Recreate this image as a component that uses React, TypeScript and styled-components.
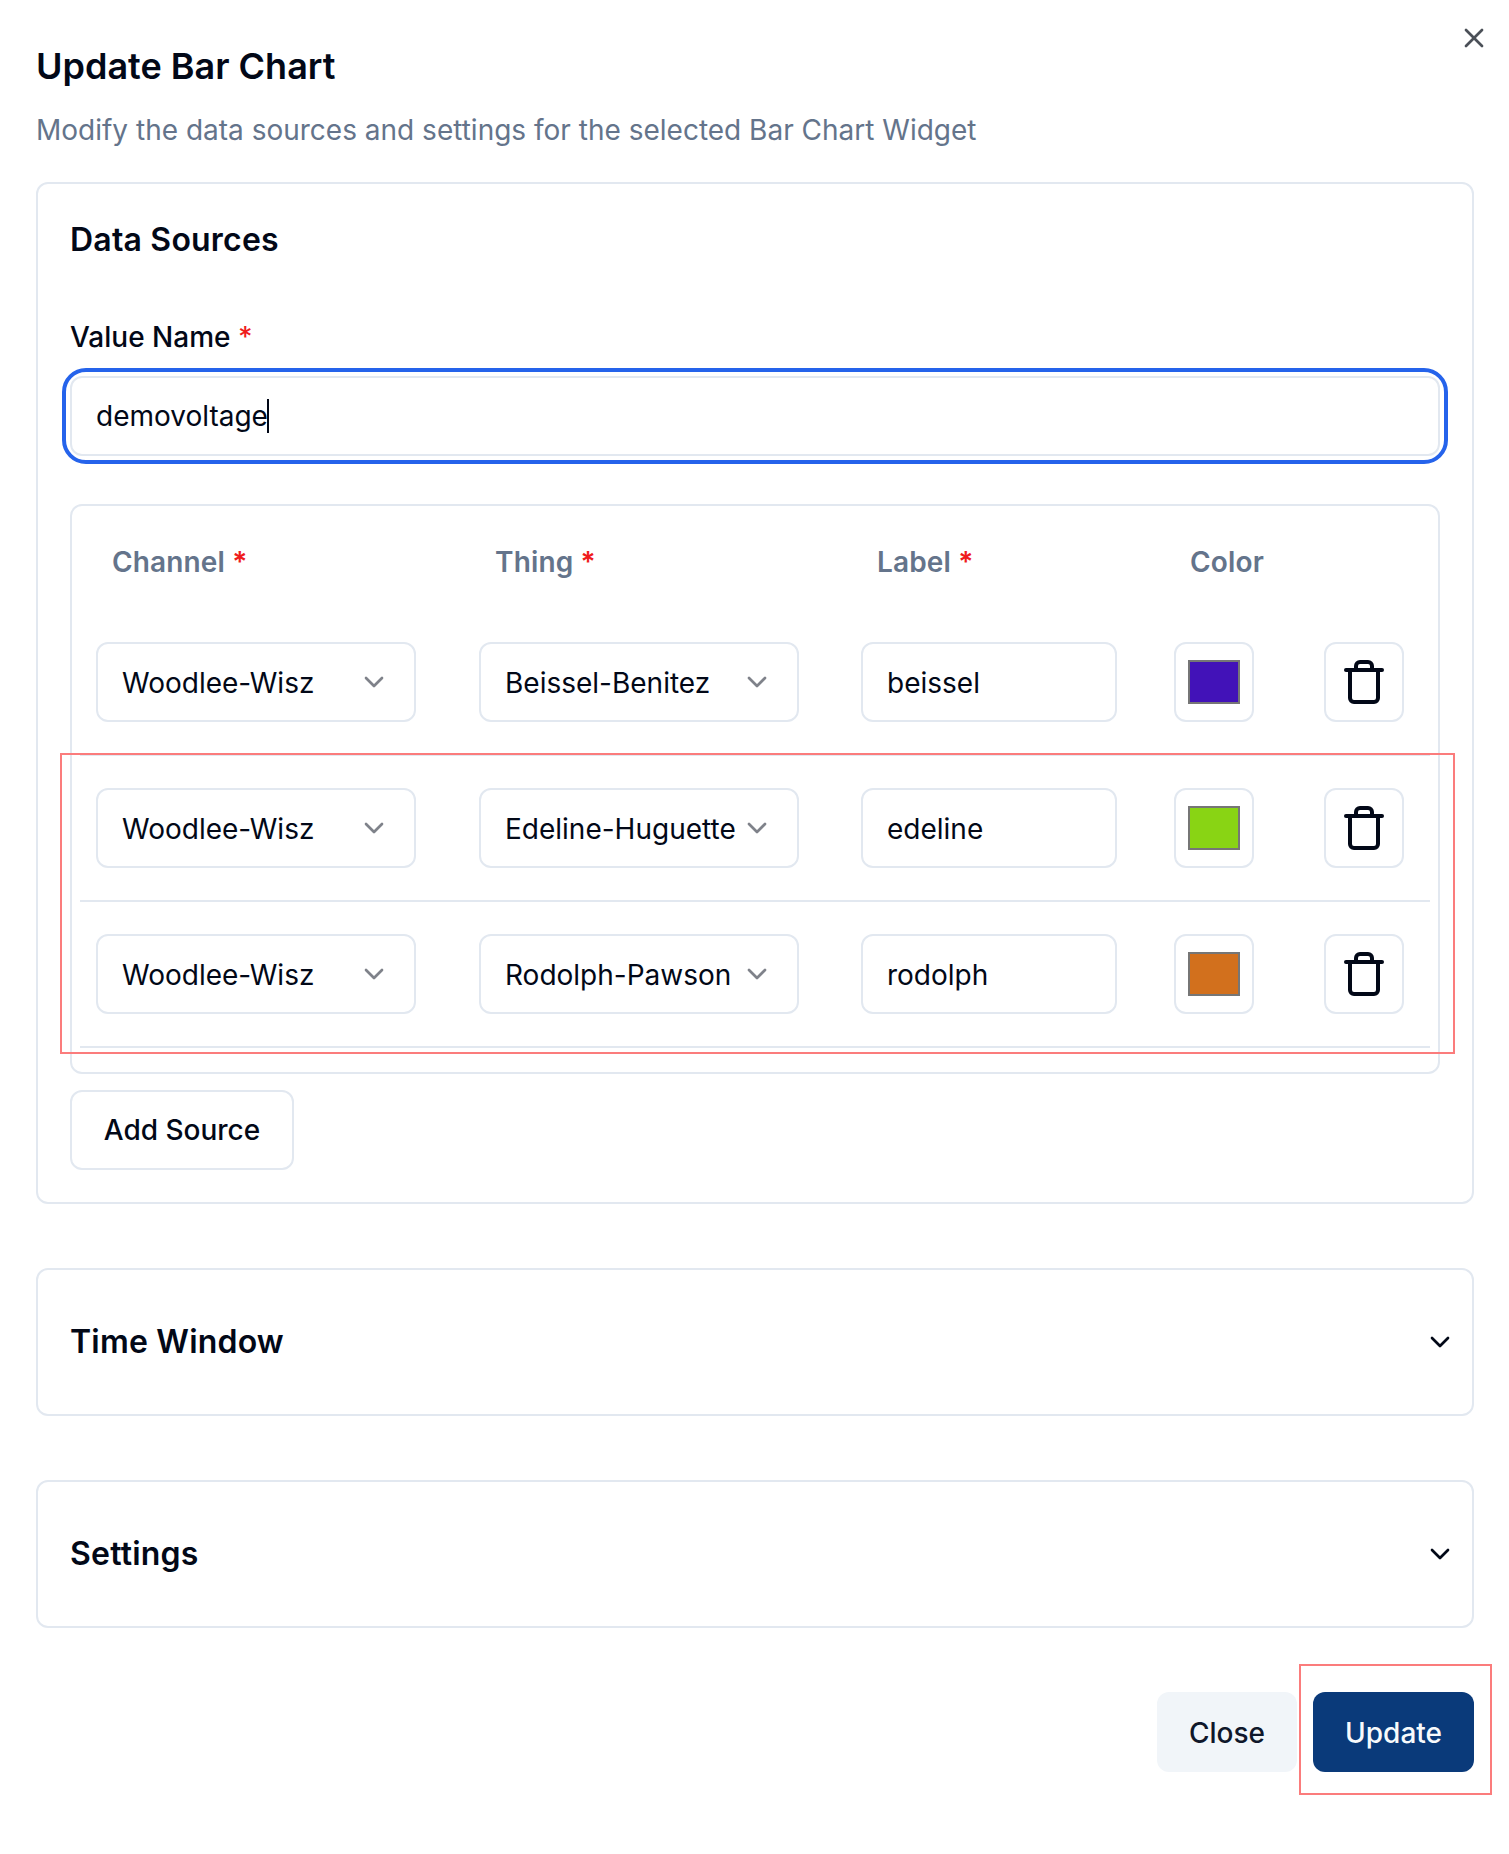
import React from 'react';
import styled, { createGlobalStyle } from 'styled-components';
import { ChevronDown, Trash, X } from 'lucide-react';

const GlobalStyle = createGlobalStyle`
  html, body {
    margin: 0;
    padding: 0;
    background: #fff;
    font-family: Inter, "Liberation Sans", sans-serif;
    color: #020817;
  }
  * {
    box-sizing: border-box;
  }
`;

const Dialog = styled.div`
  position: relative;
  width: 1509px;
  height: 1854px;
  padding: 44px 35px 0 36px;
`;

const CloseIcon = styled.button`
  position: absolute;
  top: 22px;
  right: 19px;
  display: flex;
  padding: 0;
  border: 0;
  background: none;
  color: #4b5058;
`;

const Title = styled.h2`
  margin: 0;
  font-size: 36px;
  line-height: 44px;
  font-weight: 600;
`;

const Description = styled.p`
  margin: 22px 0 0;
  font-size: 28px;
  line-height: 40px;
  color: #64748b;
`;

const Card = styled.section`
  border: 2px solid #e2e8f0;
  border-radius: 12px;
  padding: 0 32px;
`;

const DataCard = styled(Card)`
  margin-top: 32px;
  padding-top: 36px;
  padding-bottom: 32px;
`;

const CardTitle = styled.h3`
  margin: 0;
  font-size: 32px;
  line-height: 40px;
  font-weight: 600;
  letter-spacing: 0.2px;
`;

const FieldLabel = styled.label`
  display: block;
  margin-top: 57px;
  font-size: 28px;
  line-height: 40px;
  font-weight: 500;
`;

const Required = styled.span`
  color: #ef1c1c;
`;

const FocusRing = styled.div`
  margin: 11px -8px 0;
  padding: 4px;
  border: 4px solid #2563eb;
  border-radius: 24px;
`;

const ValueInput = styled.div`
  display: flex;
  align-items: center;
  height: 80px;
  padding: 0 24px;
  border: 2px solid #e2e8f0;
  border-radius: 12px;
  font-size: 28px;
`;

const Caret = styled.span`
  width: 2px;
  height: 34px;
  margin-left: -1px;
  background: #020817;
`;

const SourceTable = styled.div`
  margin-top: 40px;
  border: 2px solid #e2e8f0;
  border-radius: 12px;
  padding-bottom: 24px;
`;

const HeaderRow = styled.div`
  display: grid;
  grid-template-columns: 383px 382px 313px 150px 80px;
  height: 104px;
  padding: 8px 24px 0;
  align-items: center;
`;

const HeaderCell = styled.div`
  padding-left: 16px;
  font-size: 28px;
  font-weight: 600;
  letter-spacing: 0.15px;
  color: #64748b;
`;

const Rows = styled.div`
  position: relative;
`;

const SourceRow = styled.div`
  display: grid;
  grid-template-columns: 383px 382px 313px 150px 80px;
  margin: 0 8px;
  padding: 32px 16px;
  border-bottom: 2px solid #e2e8f0;
`;

const Control = styled.div`
  display: flex;
  align-items: center;
  justify-content: space-between;
  height: 80px;
  border: 2px solid #e2e8f0;
  border-radius: 12px;
  font-size: 28px;
`;

const SelectBox = styled(Control)`
  width: 320px;
  padding: 1px 24px 0;
  svg {
    flex: none;
    opacity: 0.5;
    margin-top: -1px;
  }
`;

const TextBox = styled(Control)`
  width: 256px;
  padding: 1px 24px 0;
`;

const IconBox = styled(Control)`
  width: 80px;
  justify-content: center;
`;

const Swatch = styled.span<{ $color: string }>`
  width: 52px;
  height: 44px;
  border: 2px solid #767676;
  background: ${(p) => p.$color};
`;

const Highlight = styled.div`
  position: absolute;
  border: 2px solid #fb7c7c;
  pointer-events: none;
`;

const RowsHighlight = styled(Highlight)`
  top: 143px;
  left: -12px;
  right: -17px;
  height: 301px;
`;

const UpdateHighlight = styled(Highlight)`
  top: -28px;
  left: -14px;
  width: 193px;
  height: 131px;
`;

const AddButton = styled.button`
  display: block;
  width: 224px;
  height: 80px;
  margin-top: 16px;
  padding: 0;
  border: 2px solid #e2e8f0;
  border-radius: 12px;
  background: #fff;
  font: 500 28px Inter, "Liberation Sans", sans-serif;
  color: #020817;
`;

const CollapsedCard = styled(Card)`
  display: flex;
  align-items: center;
  justify-content: space-between;
  height: 148px;
  margin-top: 64px;
  padding-right: 16px;
`;

const Footer = styled.div`
  display: flex;
  justify-content: flex-end;
  gap: 16px;
  margin-top: 64px;
`;

const FooterAction = styled.div`
  position: relative;
`;

const FooterButton = styled.button<{ $primary?: boolean }>`
  height: 80px;
  padding: 1px 32px 0;
  border: 0;
  border-radius: 12px;
  background: ${(p) => (p.$primary ? '#0a3a7a' : '#f1f5f9')};
  color: ${(p) => (p.$primary ? '#f8fafc' : '#0f172a')};
  font: 500 28px Inter, "Liberation Sans", sans-serif;
`;

const sources = [
  { thing: 'Beissel-Benitez', label: 'beissel', color: '#4212b8' },
  { thing: 'Edeline-Huguette', label: 'edeline', color: '#89d414' },
  { thing: 'Rodolph-Pawson', label: 'rodolph', color: '#d2701d' },
];

const App: React.FC = () => {
  return (
    <>
      <GlobalStyle />
      <Dialog>
        <CloseIcon>
          <X size={32} />
        </CloseIcon>
        <Title>Update Bar Chart</Title>
        <Description>Modify the data sources and settings for the selected Bar Chart Widget</Description>

        <DataCard>
          <CardTitle>Data Sources</CardTitle>
          <FieldLabel>
            Value Name <Required>*</Required>
          </FieldLabel>
          <FocusRing>
            <ValueInput>
              demovoltage
              <Caret />
            </ValueInput>
          </FocusRing>

          <SourceTable>
            <HeaderRow>
              <HeaderCell>
                Channel <Required>*</Required>
              </HeaderCell>
              <HeaderCell>
                Thing <Required>*</Required>
              </HeaderCell>
              <HeaderCell>
                Label <Required>*</Required>
              </HeaderCell>
              <HeaderCell>Color</HeaderCell>
            </HeaderRow>
            <Rows>
              {sources.map((source) => (
                <SourceRow key={source.label}>
                  <SelectBox>
                    Woodlee-Wisz
                    <ChevronDown size={32} />
                  </SelectBox>
                  <SelectBox>
                    {source.thing}
                    <ChevronDown size={32} />
                  </SelectBox>
                  <TextBox>{source.label}</TextBox>
                  <IconBox>
                    <Swatch $color={source.color} />
                  </IconBox>
                  <IconBox>
                    <Trash size={48} />
                  </IconBox>
                </SourceRow>
              ))}
              <RowsHighlight />
            </Rows>
          </SourceTable>

          <AddButton>Add Source</AddButton>
        </DataCard>

        <CollapsedCard>
          <CardTitle>Time Window</CardTitle>
          <ChevronDown size={32} />
        </CollapsedCard>
        <CollapsedCard>
          <CardTitle>Settings</CardTitle>
          <ChevronDown size={32} />
        </CollapsedCard>

        <Footer>
          <FooterButton>Close</FooterButton>
          <FooterAction>
            <FooterButton $primary>Update</FooterButton>
            <UpdateHighlight />
          </FooterAction>
        </Footer>
      </Dialog>
    </>
  );
};

export default App;
